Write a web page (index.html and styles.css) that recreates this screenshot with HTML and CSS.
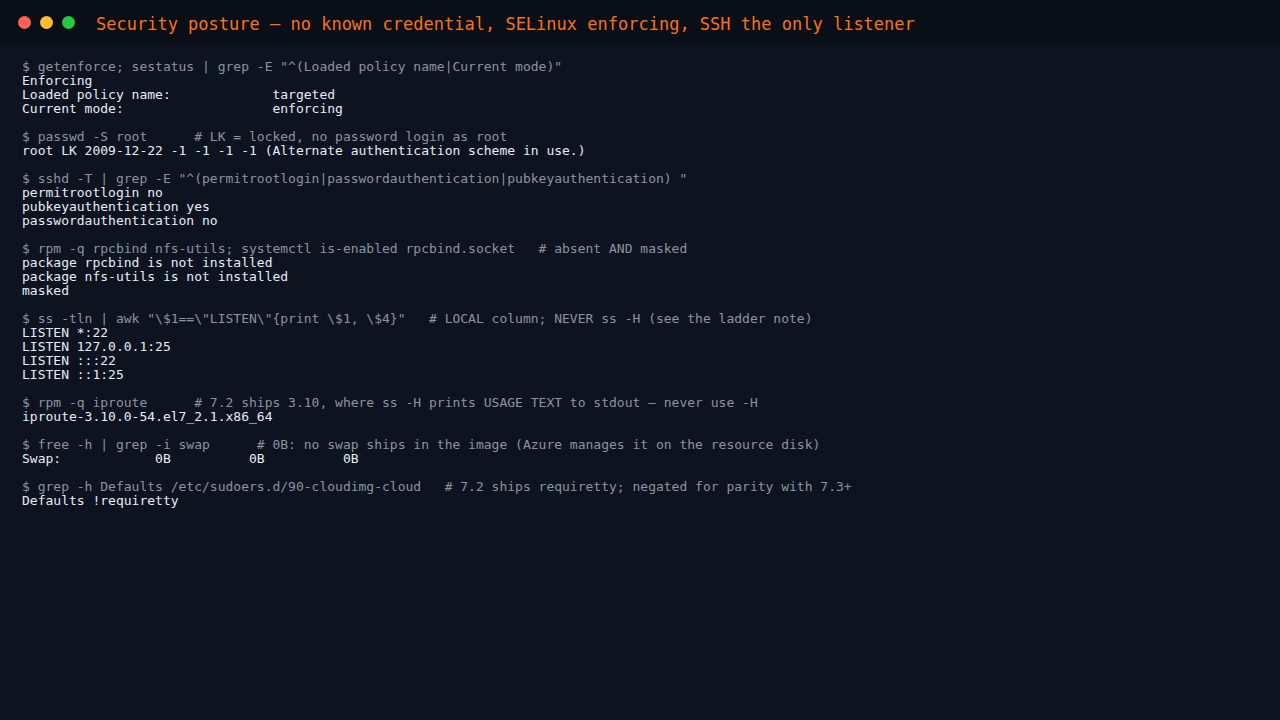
FILE: index.html
```html
<!DOCTYPE html>
<html>
<head>
<meta charset="utf-8">
<link rel="stylesheet" href="styles.css">
</head>
<body>
<div class="window">
  <div class="titlebar">
    <div class="lights">
      <span class="dot red"></span>
      <span class="dot yellow"></span>
      <span class="dot green"></span>
    </div>
    <div class="title">Security posture — no known credential, SELinux enforcing, SSH the only listener</div>
  </div>
  <pre class="term"><span class="cmd">$ getenforce; sestatus | grep -E "^(Loaded policy name|Current mode)"</span>
<span class="out">Enforcing
Loaded policy name:             targeted
Current mode:                   enforcing</span>

<span class="cmd">$ passwd -S root      # LK = locked, no password login as root</span>
<span class="out">root LK 2009-12-22 -1 -1 -1 -1 (Alternate authentication scheme in use.)</span>

<span class="cmd">$ sshd -T | grep -E "^(permitrootlogin|passwordauthentication|pubkeyauthentication) "</span>
<span class="out">permitrootlogin no
pubkeyauthentication yes
passwordauthentication no</span>

<span class="cmd">$ rpm -q rpcbind nfs-utils; systemctl is-enabled rpcbind.socket   # absent AND masked</span>
<span class="out">package rpcbind is not installed
package nfs-utils is not installed
masked</span>

<span class="cmd">$ ss -tln | awk "\$1==\"LISTEN\"{print \$1, \$4}"   # LOCAL column; NEVER ss -H (see the ladder note)</span>
<span class="out">LISTEN *:22
LISTEN 127.0.0.1:25
LISTEN :::22
LISTEN ::1:25</span>

<span class="cmd">$ rpm -q iproute      # 7.2 ships 3.10, where ss -H prints USAGE TEXT to stdout — never use -H</span>
<span class="out">iproute-3.10.0-54.el7_2.1.x86_64</span>

<span class="cmd">$ free -h | grep -i swap      # 0B: no swap ships in the image (Azure manages it on the resource disk)</span>
<span class="out">Swap:            0B          0B          0B</span>

<span class="cmd">$ grep -h Defaults /etc/sudoers.d/90-cloudimg-cloud   # 7.2 ships requiretty; negated for parity with 7.3+</span>
<span class="out">Defaults !requiretty</span></pre>
</div>
</body>
</html>
```
FILE: styles.css
```css
html, body {
  margin: 0;
  padding: 0;
  background: #0d1420;
}
.window {
  width: 1280px;
  height: 720px;
  background: #0d1420;
  display: flex;
  flex-direction: column;
}
.titlebar {
  height: 45px;
  background: #0a0e17;
  display: flex;
  align-items: center;
  padding-left: 18px;
  box-sizing: border-box;
}
.lights {
  display: flex;
  gap: 9px;
  margin-right: 21px;
}
.dot {
  width: 13px;
  height: 13px;
  border-radius: 50%;
  display: block;
}
.red { background: #ff5f57; }
.yellow { background: #febc2e; }
.green { background: #28c840; }
.title {
  font-family: "DejaVu Sans Mono", monospace;
  font-size: 17px;
  color: #f97316;
  white-space: nowrap;
  padding-top: 3px;
}
.term {
  margin: 0;
  padding: 15px 22px;
  font-family: "DejaVu Sans Mono", monospace;
  font-size: 13px;
  line-height: 14px;
  white-space: pre;
}
.cmd { color: #8b949e; }
.out { color: #e6edf3; }
```
